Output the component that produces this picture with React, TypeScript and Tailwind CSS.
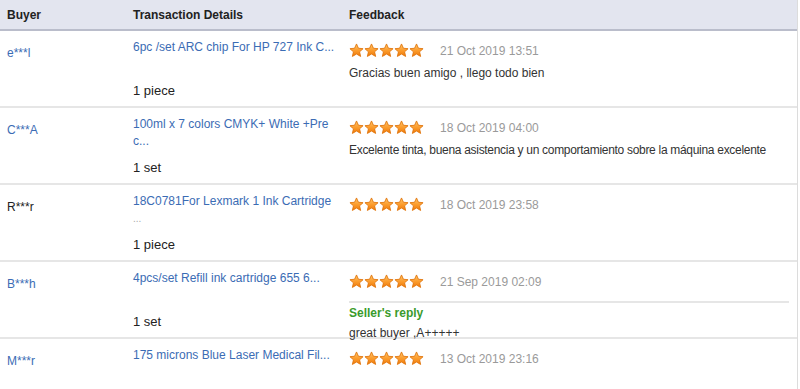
import React from 'react';

type Row = {
  buyer: string;
  buyerLink: boolean;
  title: string[];
  qty: string;
  date: string;
  text?: string;
  tight?: boolean;
  reply?: string;
};

const rows: Row[] = [
  {
    buyer: 'e***l',
    buyerLink: true,
    title: ['6pc /set ARC chip For HP 727 Ink C...'],
    qty: '1 piece',
    date: '21 Oct 2019 13:51',
    text: 'Gracias buen amigo , llego todo bien',
  },
  {
    buyer: 'C***A',
    buyerLink: true,
    title: ['100ml x 7 colors CMYK+ White +Pre', 'c...'],
    qty: '1 set',
    date: '18 Oct 2019 04:00',
    text: 'Excelente tinta, buena asistencia y un comportamiento sobre la máquina excelente',
    tight: true,
  },
  {
    buyer: 'R***r',
    buyerLink: false,
    title: ['18C0781For Lexmark 1 Ink Cartridge', '...'],
    qty: '1 piece',
    date: '18 Oct 2019 23:58',
  },
  {
    buyer: 'B***h',
    buyerLink: true,
    title: ['4pcs/set Refill ink cartridge 655 6...'],
    qty: '1 set',
    date: '21 Sep 2019 02:09',
    reply: 'great buyer ,A+++++',
  },
  {
    buyer: 'M***r',
    buyerLink: true,
    title: ['175 microns Blue Laser Medical Fil...'],
    qty: '1 piece',
    date: '13 Oct 2019 23:16',
  },
];

function Star() {
  return (
    <svg width="15" height="15" viewBox="0 0 24 24">
      <defs>
        <linearGradient id="sg" x1="0" y1="0" x2="0" y2="1">
          <stop offset="0%" stopColor="#ffc56a" />
          <stop offset="55%" stopColor="#fb9a2a" />
          <stop offset="100%" stopColor="#ee7a0c" />
        </linearGradient>
      </defs>
      <path
        d="M12 1.5l3.1 6.9 7.4.7-5.6 5 1.7 7.4L12 17.6l-6.6 3.9 1.7-7.4-5.6-5 7.4-.7z"
        fill="url(#sg)"
        stroke="#e0730a"
        strokeWidth="1.4"
        strokeLinejoin="round"
      />
    </svg>
  );
}

function Stars() {
  return (
    <div className="flex">
      {[0, 1, 2, 3, 4].map((i) => (
        <Star key={i} />
      ))}
    </div>
  );
}

export default function App() {
  return (
    <div
      className="w-[800px] h-[389px] overflow-hidden bg-white text-[12px] text-[#333]"
      style={{ fontFamily: '"Liberation Sans", Arial, sans-serif' }}
    >
      <div className="w-[798px] border-r border-[#dcdcdc] h-full">
        {/* header */}
        <div className="flex h-[31px] items-center bg-[#e3e5ef] border-b-2 border-[#babdcb] font-bold text-[#222]">
          <div className="w-[126px] pl-[7px]">Buyer</div>
          <div className="w-[216px] pl-[7px]">Transaction Details</div>
          <div className="flex-1 pl-[7px]">Feedback</div>
        </div>

        {rows.map((r, i) => (
          <div key={i} className="flex h-[77px] border-b-2 border-[#e6e6e6]">
            <div className="w-[126px] pl-[7px] pt-[13px]">
              <span className={r.buyerLink ? 'text-[#3b6cb4]' : 'text-[#222]'}>{r.buyer}</span>
            </div>
            <div className="w-[216px] pl-[7px] pt-[8px] flex flex-col">
              <div className="h-[36px] leading-[17px] text-[#3b6cb4]">
                {r.title.map((t, j) => (
                  <div key={j} className={j === 1 && t === '...' ? 'text-[#aaa] text-[10px]' : ''}>
                    {t}
                  </div>
                ))}
              </div>
              <div className="mt-[6px] text-[13px] text-[#222]">{r.qty}</div>
            </div>
            <div className="flex-1 min-w-0 pl-[7px] pt-[12px]">
              <div className="flex items-center gap-[16px] h-[15px]">
                <Stars />
                <span className="text-[#9a9a9a]">{r.date}</span>
              </div>
              {r.text && (
                <div className={r.tight ? 'mt-[6px] whitespace-nowrap tracking-[-0.3px]' : 'mt-[6px] whitespace-nowrap'}>
                  {r.text}
                </div>
              )}
              {r.reply && (
                <div className="mt-[12px] mr-[8px] border-t-2 border-[#e6e6e6] pt-[2px]">
                  <div className="font-bold text-[#3a9b2c] leading-[17px]">Seller's reply</div>
                  <div className="mt-[2px]">{r.reply}</div>
                </div>
              )}
            </div>
          </div>
        ))}
      </div>
    </div>
  );
}
